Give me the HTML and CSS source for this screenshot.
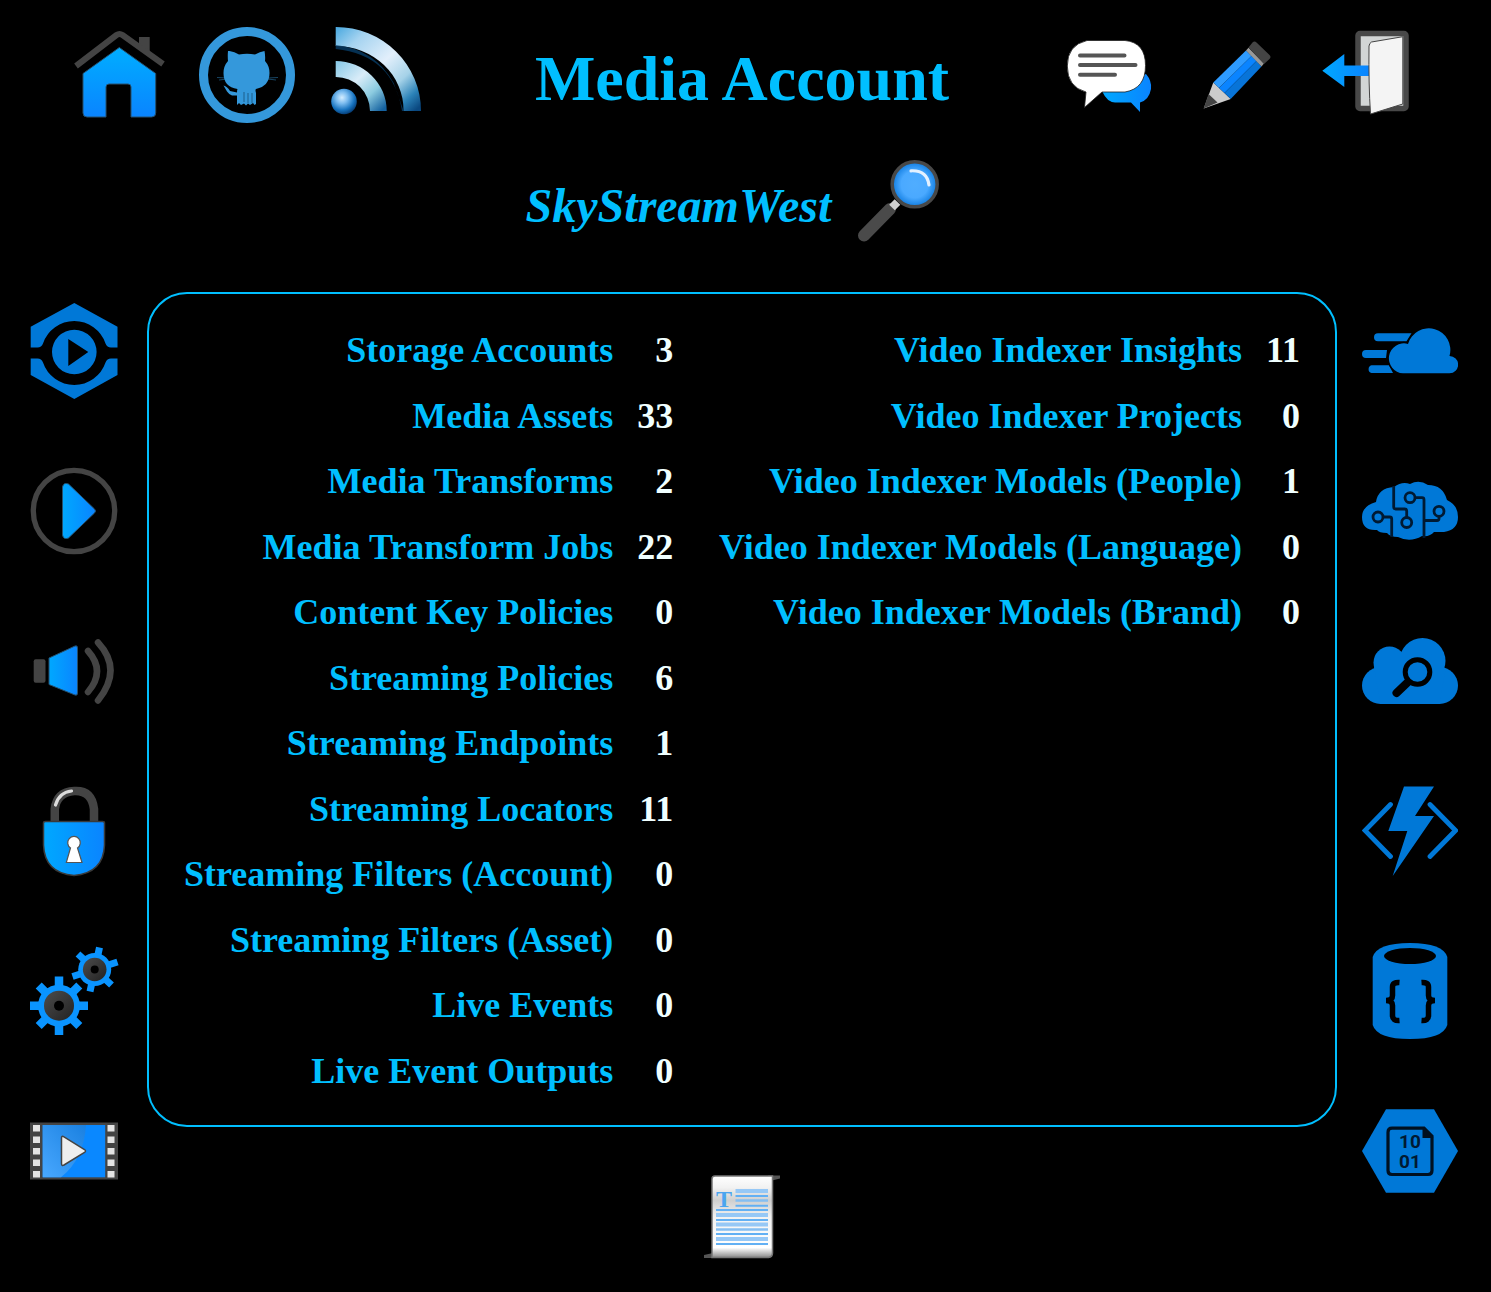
FILE: index.html
```html
<!DOCTYPE html>
<html lang="en">
<head>
<meta charset="utf-8">
<meta name="viewport" content="width=device-width, initial-scale=1">
<title>Media Account</title>
<link rel="stylesheet" href="styles.css">
</head>
<body>
<svg class="defs" aria-hidden="true">
  <defs>
    <linearGradient id="blueDown" x1="0" y1="0" x2="0" y2="1"><stop offset="0" stop-color="#00aeff"/><stop offset="1" stop-color="#0a84ff"/></linearGradient>
    <linearGradient id="blueRight" x1="0" y1="0" x2="1" y2="0"><stop offset="0" stop-color="#00a8ff"/><stop offset="1" stop-color="#0a84ff"/></linearGradient>
    <radialGradient id="dot" cx=".42" cy=".35" r=".65"><stop offset="0" stop-color="#d4edff"/><stop offset=".35" stop-color="#7dbdf0"/><stop offset=".75" stop-color="#1672be"/><stop offset="1" stop-color="#07407a"/></radialGradient>
    <linearGradient id="waveBig" gradientUnits="userSpaceOnUse" x1="10" y1="0" x2="88" y2="84"><stop offset="0" stop-color="#4aa9e0"/><stop offset=".2" stop-color="#a5d3f0"/><stop offset=".5" stop-color="#e2effb"/><stop offset=".72" stop-color="#a5d2e8"/><stop offset=".88" stop-color="#2b82b8"/><stop offset="1" stop-color="#0a4880"/></linearGradient>
    <linearGradient id="waveSmall" gradientUnits="userSpaceOnUse" x1="10" y1="36" x2="54" y2="84"><stop offset="0" stop-color="#8ccbe8"/><stop offset=".4" stop-color="#d9ecf8"/><stop offset=".7" stop-color="#8ccbe0"/><stop offset="1" stop-color="#1562a0"/></linearGradient>
    <radialGradient id="lens"><stop offset="0" stop-color="#50adff"/><stop offset=".6" stop-color="#4aa9ff"/><stop offset="1" stop-color="#0f7ce0"/></radialGradient>
    <linearGradient id="film" x1="0" y1="1" x2="1" y2="0"><stop offset="0" stop-color="#48a8ff"/><stop offset="1" stop-color="#1a80e0"/></linearGradient>
    <linearGradient id="metal" x1="0" y1="0" x2="1" y2="1"><stop offset="0" stop-color="#4c4c4c"/><stop offset="1" stop-color="#222"/></linearGradient>
    <linearGradient id="paper" x1="0" y1="0" x2="0" y2="1"><stop offset="0" stop-color="#fff"/><stop offset=".14" stop-color="#f2f2f2"/><stop offset=".3" stop-color="#cfcfcf"/><stop offset=".5" stop-color="#f2f2f2"/><stop offset=".88" stop-color="#fff"/><stop offset="1" stop-color="#8a8a8a"/></linearGradient>
  </defs>
</svg>

<div class="page">
  <header class="top">
    <nav class="icon-row" aria-label="Site">
      <a class="icon" href="#home" aria-label="Home"><svg viewBox="0 0 96 96">
        <path d="M68 10h10.700v18l-10.700-8z" fill="#444"/>
        <path d="M5 39L45.500 8q3-2 6 0L92 37" fill="none" stroke="#444" stroke-width="6"/>
        <path d="M48.300 20.500L84.700 46.500V86q0 4-4 4H60V60q0-3-3-3H38q-3 0-3 3v30H16q-4 0-4-4V46.500z" fill="url(#blueDown)" stroke="#26506e" stroke-width="1"/>
      </svg></a>
      <a class="icon" href="#source" aria-label="GitHub"><svg viewBox="0 0 96 96" fill="#3498db" stroke="#3498db">
        <circle cx="48" cy="48" r="43.500" fill="none" stroke-width="9"/>
        <path stroke="none" d="M30.500 24q5 .5 9.500 3.500 8-1.500 16 0 5-3 9.500-3.500 1 5 .5 10 4.500 5 4.500 12 0 13-13.500 16-1 .5 0 4V77l-1.500 1-1.500-2-3 2-2-1.500-2 2-2-2-3 1.500-2-2-2 2V68.500h-5q-3-1-5-4l-3.500-6q4 1 6.500 5.500l7 1.500q0-3 .5-3.500-14-2-14-16 0-7 4.500-12-.5-5 0-10z"/>
        <path d="M45 65v10M49 66v10M53 66v10" stroke="#1d5f8b" stroke-width="1"/>
        <path d="M18 50.500l10 .5M69 51l10-.5M20 53l8-1M69 52l8 1" opacity=".45" stroke-width="1"/>
      </svg></a>
      <a class="icon" href="#feed" aria-label="Feed"><svg viewBox="0 0 96 96">
        <path d="M8.700 0A85 84 0 0 1 94 84H76.500A67.500 64 0 0 0 8.700 19z" fill="url(#waveBig)"/>
        <path d="M8.700 18q39 4 58 38l10 28H75Q66 28 8.700 22z" fill="#07406e" opacity=".75"/>
        <path d="M8.700 34A51 50 0 0 1 59.700 84H43A34 34 0 0 0 8.700 50z" fill="url(#waveSmall)"/>
        <circle cx="17" cy="74.500" r="12.800" fill="url(#dot)"/>
      </svg></a>
    </nav>
    <h1 class="title">Media Account</h1>
    <nav class="icon-row" aria-label="Account">
      <button class="icon" type="button" aria-label="Messages"><svg viewBox="0 0 96 96">
        <path d="M85 47q6 7 5 15-2 11-11 13.500V85l-9-9.500H54Q46 75 41.500 65z" fill="url(#blueRight)"/>
        <path d="M26 13.500h38q20.500 2 20.500 25T64 65H41L23.500 80.500 25 65Q6.300 60 6.300 39T26 13.500z" fill="#fff" stroke="#222" stroke-width=".8"/>
        <path d="M19 28.500h44.500M19 38h55.500M19 47.800h35" stroke="#555" stroke-width="4" stroke-linecap="round"/>
      </svg></button>
      <button class="icon" type="button" aria-label="Edit"><svg viewBox="0 0 96 96">
        <path d="M24.300 55.500L41.700 72 14.700 81.500z" fill="#ccc"/>
        <path d="M19.500 67l9 8.500-13.800 6z" fill="#444"/>
        <path d="M57 23.500L62.500 29 30 61l-5.700-5.500z" fill="#2e9bff"/>
        <path d="M62.500 29l5 5L35.500 66 30 61z" fill="#0a84ff"/>
        <path d="M67.500 34l5 5.500L41.700 72l-6.200-6z" fill="#0874d8"/>
        <path d="M57 23.500l2.500-2.800L75 36.500l-2.500 3z" fill="#999"/>
        <path d="M59.500 20.500l4-5q2-2 4 0L80.500 28q2 2 0 4L75 37z" fill="#444"/>
      </svg></button>
      <a class="icon" href="#signout" aria-label="Sign out"><svg viewBox="0 0 96 96">
        <rect x="41" y="6.500" width="48" height="75" rx="2" fill="#d2d5d5" stroke="#484848" stroke-width="5.500"/>
        <path d="M5.300 43.700L27.300 27v11.500H52V49H27.300v11z" fill="url(#blueRight)"/>
        <path d="M54.500 15L85.800 9.700V77L53.500 87q-2-30-1.500-68 .5-3 2.500-4z" fill="#f4f4f4" stroke="#444" stroke-width="1"/>
      </svg></a>
    </nav>
  </header>

  <div class="account">
    <h2 class="account-name">SkyStreamWest</h2>
    <button class="icon" type="button" aria-label="Search"><svg viewBox="0 0 96 96">
      <path d="M13 82.500L39 56" stroke="#4a4a4a" stroke-width="12" stroke-linecap="round"/>
      <path d="M41 54.500l5.500-5.500" stroke="#d0d0d0" stroke-width="8"/>
      <circle cx="63.700" cy="31.300" r="22.500" fill="url(#lens)" stroke="#484848" stroke-width="3.500"/>
      <path d="M60 17.800Q76 17 78 32" fill="none" stroke="#e4f1ff" stroke-width="3.200" stroke-linecap="round"/>
    </svg></button>
  </div>

  <div class="workspace">
    <nav class="side" aria-label="Media">
      <a class="icon" href="#media" aria-label="Media services"><svg viewBox="0 0 96 96" fill="#0078d7">
        <path d="M48.300 0L91.500 23.700V44.500H85q-4 0-5.500-4a33 33 0 0 0-62.500 0q-1.500 4-5.500 4H4.700V23.700z"/>
        <path d="M48.300 96L91.500 72V55.500H85q-4 0-5.500 4a33 33 0 0 1-62.500 0q-1.500-4-5.500-4H4.700V72z"/>
        <path fill-rule="evenodd" d="M26 49a22.300 22.300 0 1 1 44.600 0a22.300 22.300 0 1 1-44.600 0zM42.300 36v27L62.300 49z"/>
      </svg></a>
      <a class="icon" href="#player" aria-label="Player"><svg viewBox="0 0 96 96">
        <circle cx="48" cy="48" r="40.700" fill="none" stroke="#444" stroke-width="5.300"/>
        <path d="M36.500 24q1-5 6-3L68.500 46q2 2 0 4L42.500 75q-5 2-6-3z" fill="url(#blueRight)" stroke="#26506e" stroke-width="1"/>
      </svg></a>
      <a class="icon" href="#audio" aria-label="Audio"><svg viewBox="0 0 96 96">
        <rect x="7.700" y="36.300" width="11.800" height="23.500" rx="2" fill="#444"/>
        <path d="M23 35L49 23q2.500-1 2.500 2v45q0 3-2.500 2L23 61.500z" fill="url(#blueRight)" stroke="#26506e" stroke-width="1"/>
        <path d="M62 28q18 20 0 41M72 19.500q25 27 0 58" fill="none" stroke="#444" stroke-width="6.500" stroke-linecap="round"/>
      </svg></a>
      <a class="icon" href="#protection" aria-label="Content protection"><svg viewBox="0 0 96 96">
        <path d="M28.800 40V26q2-17 19.500-18t19.700 18v14" fill="none" stroke="#444" stroke-width="8.500"/>
        <path d="M29.500 22Q33 9.500 45.500 8" fill="none" stroke="#ddd" stroke-width="3.200" stroke-linecap="round"/>
        <path d="M17.500 40q0-1.500 2-1.500h57q2 0 2 1.500v22q-1 28-30.500 30.500-29.500-2.500-30.500-30.500z" fill="url(#blueRight)" stroke="#3a3a3a" stroke-width="1.500"/>
        <path d="M44.500 65a6.300 6.300 0 1 1 7 0l4.500 14.500H40.300z" fill="#fff" stroke="#555" stroke-width="1.200"/>
      </svg></a>
      <a class="icon" href="#processing" aria-label="Processing"><svg viewBox="0 0 96 96">
        <g stroke="#0a94ff" stroke-width="8.500">
          <path d="M33 33.500v58.500M4 62.700h58M12.700 42.400l40.600 40.600M12.700 83l40.600-40.600"/>
        </g>
        <circle cx="33" cy="62.700" r="21" fill="#0a94ff"/>
        <circle cx="33" cy="62.700" r="15" fill="url(#metal)"/><circle cx="33" cy="62.700" r="5"/>
        <g stroke="#0a94ff" stroke-width="7">
          <path d="M64 48.500l9.500-44M46.500 33.500l45-14.500M52 11l33.500 31"/>
        </g>
        <circle cx="68.700" cy="26.500" r="16.500" fill="#0a94ff"/>
        <circle cx="68.700" cy="26.500" r="11.800" fill="url(#metal)"/><circle cx="68.700" cy="26.500" r="4"/>
      </svg></a>
      <a class="icon" href="#gallery" aria-label="Video gallery"><svg viewBox="0 0 96 96">
        <rect x="4" y="19.500" width="88" height="57" fill="#444"/>
        <rect x="16.700" y="22" width="62.500" height="52.300" fill="#0a88ff"/>
        <path d="M16.700 22H60q-2 34-25 52.300H16.700z" fill="url(#film)"/>
        <path d="M10.500 22v54M85 22v54" stroke="#e4e4e4" stroke-width="7" stroke-dasharray="6.500 5"/>
        <path d="M35.500 35q0-2.500 2.500-1.200L58.500 46.500q2 1.500 0 3L38 62q-2.500 1.300-2.500-1.500z" fill="#eee" stroke="#444" stroke-width="1.500"/>
      </svg></a>
    </nav>

    <main class="center">
      <section class="panel">
        <table class="counts">
          <tbody>
            <tr><th scope="row">Storage Accounts</th><td>3</td></tr>
            <tr><th scope="row">Media Assets</th><td>33</td></tr>
            <tr><th scope="row">Media Transforms</th><td>2</td></tr>
            <tr><th scope="row">Media Transform Jobs</th><td>22</td></tr>
            <tr><th scope="row">Content Key Policies</th><td>0</td></tr>
            <tr><th scope="row">Streaming Policies</th><td>6</td></tr>
            <tr><th scope="row">Streaming Endpoints</th><td>1</td></tr>
            <tr><th scope="row">Streaming Locators</th><td>11</td></tr>
            <tr><th scope="row">Streaming Filters (Account)</th><td>0</td></tr>
            <tr><th scope="row">Streaming Filters (Asset)</th><td>0</td></tr>
            <tr><th scope="row">Live Events</th><td>0</td></tr>
            <tr><th scope="row">Live Event Outputs</th><td>0</td></tr>
          </tbody>
        </table>
        <table class="counts">
          <tbody>
            <tr><th scope="row">Video Indexer Insights</th><td>11</td></tr>
            <tr><th scope="row">Video Indexer Projects</th><td>0</td></tr>
            <tr><th scope="row">Video Indexer Models (People)</th><td>1</td></tr>
            <tr><th scope="row">Video Indexer Models (Language)</th><td>0</td></tr>
            <tr><th scope="row">Video Indexer Models (Brand)</th><td>0</td></tr>
          </tbody>
        </table>
      </section>
      <a class="icon" href="#script" aria-label="Transcript"><svg viewBox="0 0 96 96">
        <path d="M74 6.500h12v3l-8 2zM10 89v-3l9-2v5z" fill="#555"/>
        <path d="M21 7h57.500v77q0 4-4 4.500H18V10q0-3 3-3z" fill="url(#paper)" stroke="#777" stroke-width="1.500"/>
        <text class="drop-cap" x="30" y="38" text-anchor="middle">T</text>
        <path d="M41.500 22h32.500M22 46h52M22 55.500h52M22 70h52" stroke="#96c8f6" stroke-width="4"/>
        <path d="M22 60.500h52M41.500 31.500h32.500" stroke="#84bef2" stroke-width="2.500"/>
        <path d="M41.500 27h32.500M41.500 36.700h32.500M22 41h52M22 51h52M22 65h52M22 75h52" stroke="#62b0f4" stroke-width="2"/>
      </svg></a>
    </main>

    <nav class="side" aria-label="Services">
      <a class="icon" href="#cdn" aria-label="Content delivery"><svg viewBox="0 0 96 96" fill="#0078d7">
        <path d="M16 30.300h33.500l-5 8H16a4 4 0 0 1 0-8zM4 47h21l-1 8H4a4 4 0 0 1 0-8zM9.500 62.300h17.500l4 7.700H9.500a4 4 0 0 1 0-7.700z"/>
        <path stroke="#000" stroke-width="3" paint-order="stroke" d="M41 70.300a15 15 0 1 1 5-29.400A21.500 21.500 0 0 1 87.500 53a8.600 8.600 0 0 1 0 17.300z"/>
      </svg></a>
      <a class="icon" href="#cognitive" aria-label="Cognitive services"><svg viewBox="0 0 96 96">
        <path fill="#0078d7" d="M14 39q2-14 18-15 8-6 16-3 9-5 18 1 15 0 19 15 11 5 11 17 0 13-14 15-7 0-10 0-4 5-12 4-12 7-24 1-8 0-11-4-8 0-10-3Q0 68 0 54 0 43 14 39z"/>
        <g fill="none" stroke="#001a33" stroke-width="2.800">
          <circle cx="48" cy="34.700" r="5"/><path d="M53 34.700h7q2 0 2 2V75"/>
          <circle cx="77" cy="48.300" r="5"/><path d="M77 53.500v2q0 2-2 2H62"/>
          <path d="M31.700 23v21q0 2 2 2h9q2 0 2 2v6"/><circle cx="44.700" cy="59.500" r="5"/>
          <circle cx="16" cy="54" r="5"/><path d="M21 54h6.700q2 0 2 2v18"/>
        </g>
      </svg></a>
      <a class="icon" href="#search" aria-label="Cloud search"><svg viewBox="0 0 96 96">
        <g fill="#0078d7">
          <circle cx="18.500" cy="62.500" r="18.500"/><circle cx="77.500" cy="62.500" r="18.500"/>
          <circle cx="27.500" cy="39.500" r="16"/><circle cx="60.500" cy="38" r="23"/>
          <path d="M12 44l16-14h40l15.500 16-6 35h-59z"/>
        </g>
        <circle cx="55.500" cy="49" r="12.300" fill="none" stroke="#000" stroke-width="5"/>
        <path d="M45.500 59.500L34.500 70" stroke="#000" stroke-width="8" stroke-linecap="round"/>
      </svg></a>
      <a class="icon" href="#functions" aria-label="Functions"><svg viewBox="0 0 96 96">
        <path d="M28.500 21.500L3 47.500l25.500 26M68 21.500l25.500 26L68 73.500" fill="none" stroke="#0078d7" stroke-width="4.800" stroke-linecap="round"/>
        <path d="M42 3.500h30L53 33h19L30.700 93l14.600-45H26.300z" fill="#0078d7"/>
      </svg></a>
      <a class="icon" href="#database" aria-label="Database"><svg viewBox="0 0 96 96">
        <path d="M10.700 14Q15 0 48 0t37.300 14v68Q81 96 48 96T10.700 82z" fill="#0078d7"/>
        <ellipse cx="48" cy="13" rx="26" ry="8"/>
        <path d="M37.500 39.500q-7-.5-7 4.500v8.500q0 5-6.500 5 6.500 0 6.500 5v10q0 5.500 7 5M59.500 39.500q7-.5 7 4.500v8.500q0 5 6.500 5-6.500 0-6.500 5v10q0 5.500-7 5" fill="none" stroke="#000" stroke-width="5.500"/>
      </svg></a>
      <a class="icon" href="#storage" aria-label="Storage"><svg viewBox="0 0 96 96">
        <path d="M24 6.300h48L96 48 72 89.700H24L0 48z" fill="#0078d7"/>
        <path d="M30 25.200h32l8 8V67.500q0 4-4 4H30q-4 0-4-4V29.200q0-4 4-4z" fill="none" stroke="#001020" stroke-width="3.200"/>
        <path d="M60.500 24v11h11z" fill="#001020"/>
        <text class="bits" text-anchor="middle"><tspan x="48" y="45">10</tspan><tspan x="48" y="65">01</tspan></text>
      </svg></a>
    </nav>
  </div>
</div>
</body>
</html>
```
FILE: styles.css
```css
* {
  box-sizing: border-box;
}

body {
  margin: 0;
  background: #000;
  color: #00bfff;
  font-family: "Liberation Serif", "Times New Roman", serif;
}

.defs {
  position: absolute;
  width: 0;
  height: 0;
}

.page {
  padding: 27px 8px 27px 0;
}

.icon {
  display: block;
  flex: none;
  width: 96px;
  height: 96px;
  padding: 0;
  border: 0;
  background: none;
  cursor: pointer;
}

.icon svg {
  display: block;
  width: 100%;
  height: 100%;
}

.top {
  display: flex;
  justify-content: space-between;
  align-items: center;
  padding: 0 70px 0 71px;
}

.icon-row {
  display: flex;
  gap: 32px;
}

.title {
  margin: 0;
  padding-top: 8px;
  font-size: 64px;
  font-weight: bold;
}

.account {
  display: flex;
  justify-content: center;
  align-items: center;
  gap: 20px;
  margin-top: 30px;
  padding-right: 10px;
}

.account-name {
  margin: 0;
  padding-top: 8px;
  font-size: 48px;
  font-style: italic;
  font-weight: bold;
}

.workspace {
  display: grid;
  grid-template-columns: 147px minmax(0, 1fr) 146px;
  margin-top: 43px;
}

.side {
  display: flex;
  flex-direction: column;
  align-items: center;
  gap: 64px;
  padding-top: 11px;
}

.center {
  display: flex;
  flex-direction: column;
  align-items: center;
  gap: 42px;
}

.panel {
  display: flex;
  justify-content: space-between;
  align-items: flex-start;
  width: 100%;
  padding: 24px 35px 21px;
  border: 2px solid #00bfff;
  border-radius: 40px;
}

.counts {
  border-collapse: collapse;
  font-size: 36px;
  font-weight: bold;
  line-height: 1.82;
  text-align: right;
  white-space: nowrap;
}

.counts th,
.counts td {
  padding: 0;
  text-align: right;
}

.counts td {
  padding-left: 24px;
  color: #f0ffff;
}

.drop-cap {
  fill: #4aa5f0;
  font: bold 24px "Liberation Serif", serif;
}

.bits {
  fill: #001a33;
  font: bold 19px Roboto, sans-serif;
}
```
